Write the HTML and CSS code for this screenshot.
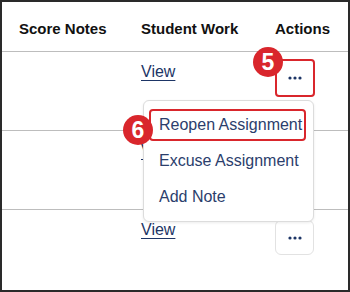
FILE: index.html
```html
<html>

<head>
    <link rel="stylesheet" href="styles.css">
</head>

<body>

<div class="frame">

    <div class="grid-row head">
        <div class="cell">Score Notes</div>
        <div class="cell">Student Work</div>
        <div class="cell">Actions</div>
    </div>

    <div class="grid-row">
        <div class="cell"></div>
        <div class="cell"><a class="view" href="#">View</a></div>
        <div class="cell action-cell">
            <button class="more marked">
                <svg width="14" height="4" viewBox="0 0 14 4"><circle cx="2" cy="2" r="1.6"/><circle cx="7" cy="2" r="1.6"/><circle cx="12" cy="2" r="1.6"/></svg>
            </button>
            <span class="badge badge-five">5</span>

            <div class="menu">
                <div class="menu-item marked-item">Reopen Assignment</div>
                <div class="menu-item">Excuse Assignment</div>
                <div class="menu-item">Add Note</div>
            </div>
            <span class="badge badge-six">6</span>
        </div>
    </div>

    <div class="grid-row">
        <div class="cell"></div>
        <div class="cell"><a class="view" href="#">View</a></div>
        <div class="cell">
            <button class="more">
                <svg width="14" height="4" viewBox="0 0 14 4"><circle cx="2" cy="2" r="1.6"/><circle cx="7" cy="2" r="1.6"/><circle cx="12" cy="2" r="1.6"/></svg>
            </button>
        </div>
    </div>

    <div class="grid-row last">
        <div class="cell"></div>
        <div class="cell"><a class="view" href="#">View</a></div>
        <div class="cell">
            <button class="more">
                <svg width="14" height="4" viewBox="0 0 14 4"><circle cx="2" cy="2" r="1.6"/><circle cx="7" cy="2" r="1.6"/><circle cx="12" cy="2" r="1.6"/></svg>
            </button>
        </div>
    </div>

</div>

</body>

</html>
```

FILE: styles.css
```css
body {
    margin: 0;
    font-family: "Liberation Sans", Arial, sans-serif;
}

.frame {
    width: 350px;
    height: 292px;
    box-sizing: border-box;
    border: 2px solid #2a2a2a;
    overflow: hidden;
    background: #fff;
}

.grid-row {
    display: grid;
    grid-template-columns: 122px 134px 1fr;
    padding-left: 17px;
    height: 79px;
    padding-top: 10px;
    box-sizing: border-box;
    border-bottom: 1px solid #bdbdbd;
}

.grid-row.head {
    height: 50px;
    padding-top: 17px;
    font-weight: bold;
    font-size: 15px;
    line-height: 20px;
    color: #111;
}

.grid-row.last {
    border-bottom: none;
}

.action-cell {
    position: relative;
}

.view {
    font-size: 16px;
    line-height: 20px;
    color: #1d3566;
    text-decoration: underline;
    text-underline-offset: 3px;
}

.more {
    width: 39px;
    height: 35px;
    box-sizing: border-box;
    border: 1px solid #e2e2e2;
    border-radius: 6px;
    background: #fff;
    padding: 0;
    display: flex;
    align-items: center;
    justify-content: center;
    fill: #1d3566;
}

.more.marked {
    width: 40px;
    height: 38px;
    margin-top: -3px;
    border: 2px solid #d9262c;
    border-radius: 4px;
}

.badge {
    position: absolute;
    width: 30px;
    height: 30px;
    border-radius: 50%;
    background: #d9262c;
    color: #fff;
    font-weight: bold;
    font-size: 23px;
    line-height: 30px;
    text-align: center;
    z-index: 3;
}

.badge-five {
    left: -22px;
    top: -15px;
}

.badge-six {
    left: -152px;
    top: 53px;
}

.menu {
    position: absolute;
    left: -132px;
    top: 38px;
    width: 171px;
    box-sizing: border-box;
    padding: 8px 7px 8px 5px;
    background: #fff;
    border: 1px solid #dcdcdc;
    border-radius: 6px;
    box-shadow: 0 1px 3px rgba(0, 0, 0, 0.08);
    z-index: 2;
}

.menu-item {
    height: 32px;
    box-sizing: border-box;
    border: 2px solid transparent;
    border-radius: 4px;
    padding-left: 8px;
    font-size: 16px;
    line-height: 28px;
    color: #2b3e6c;
    margin-bottom: 4px;
    white-space: nowrap;
}

.menu-item:last-child {
    margin-bottom: 0;
}

.menu-item.marked-item {
    border-color: #d9262c;
}
```
